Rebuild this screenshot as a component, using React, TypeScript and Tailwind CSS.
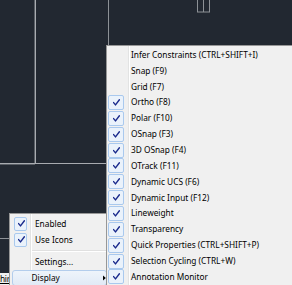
import React from "react";

const mainItems: { label: string; checked: boolean }[] = [
  { label: "Infer Constraints (CTRL+SHIFT+I)", checked: false },
  { label: "Snap (F9)", checked: false },
  { label: "Grid (F7)", checked: false },
  { label: "Ortho (F8)", checked: true },
  { label: "Polar (F10)", checked: true },
  { label: "OSnap (F3)", checked: true },
  { label: "3D OSnap (F4)", checked: true },
  { label: "OTrack (F11)", checked: true },
  { label: "Dynamic UCS (F6)", checked: true },
  { label: "Dynamic Input (F12)", checked: true },
  { label: "Lineweight", checked: true },
  { label: "Transparency", checked: true },
  { label: "Quick Properties (CTRL+SHIFT+P)", checked: true },
  { label: "Selection Cycling (CTRL+W)", checked: true },
  { label: "Annotation Monitor", checked: true },
];

function CheckMark() {
  return (
    <svg width="7" height="7" viewBox="0 0 7 7" className="ml-[2px]">
      <path d="M0.6 3.6 L2.5 5.9 L6.4 0.8" stroke="#1a2a8c" strokeWidth="1.4" fill="none" strokeLinecap="round" strokeLinejoin="round" />
    </svg>
  );
}

function CheckBox({ w }: { w: string }) {
  return (
    <div className={`${w} h-[14px] rounded-[2px] border border-[#a9c9ee] bg-[#eaf2fb] flex items-center justify-center`}>
      <CheckMark />
    </div>
  );
}

function MainRow({ label, checked }: { label: string; checked: boolean }) {
  return (
    <div className="flex items-center h-[15.86px]">
      <div className="w-[21px] flex items-center pl-[0.5px]">
        {checked ? (
          <div className="w-[16px] h-[15px] rounded-[2px] border border-[#a9c9ee] bg-[#eaf2fb] flex items-center justify-center">
            <CheckMark />
          </div>
        ) : null}
      </div>
      <span className="ml-[3px] whitespace-nowrap leading-none">{label}</span>
    </div>
  );
}

export default function App() {
  return (
    <div className="relative w-[292px] h-[285px] overflow-hidden bg-[#222831] font-['Noto_Sans',sans-serif] text-[8.3px] text-black">
      {/* CAD canvas drawing */}
      <svg width="292" height="285" className="absolute inset-0">
        <line x1="34.5" y1="0" x2="34.5" y2="164" stroke="#5a5f66" />
        <line x1="35.5" y1="0" x2="35.5" y2="163" stroke="#a8abb0" />
        <line x1="0" y1="163.5" x2="106" y2="163.5" stroke="#a8abb0" />
        <line x1="0" y1="164.5" x2="35" y2="164.5" stroke="#5a5f66" />
        <line x1="108.5" y1="0" x2="108.5" y2="45" stroke="#8d9196" />
        <rect x="197.5" y="-1" width="12" height="13" stroke="#8d9196" fill="none" />
        <line x1="203.5" y1="-1" x2="203.5" y2="12" stroke="#8d9196" />
        <line x1="0" y1="238.5" x2="9" y2="238.5" stroke="#8d9196" />
      </svg>

      {/* partially hidden tab at bottom-left */}
      <div className="absolute left-0 top-[273px] w-[10px] h-[12px] bg-[#f0f0f0] flex items-start">
        <span className="mt-[2px] whitespace-nowrap leading-none underline tracking-[-0.3px]">hir</span>
      </div>

      {/* left context menu */}
      <div className="absolute left-[9px] top-[213px] w-[99px] h-[80px] border border-[#979797] bg-[#f0f0f0] pt-[2px] pl-[1px] bg-[linear-gradient(to_right,transparent_20px,#e2e3e3_20px,#e2e3e3_21px,#ffffff_21px,#ffffff_22px,transparent_22px)]">
        <div className="flex items-center h-[15.86px]">
          <div className="w-[20px] flex items-center pl-[3px]">
            <CheckBox w="w-[13px]" />
          </div>
          <span className="ml-[4px] leading-none">Enabled</span>
        </div>
        <div className="flex items-center h-[15.86px]">
          <div className="w-[20px] flex items-center pl-[3px]">
            <CheckBox w="w-[13px]" />
          </div>
          <span className="ml-[4px] leading-none">Use Icons</span>
        </div>
        <div className="h-[6.3px] pl-[21px] pt-[2.5px]">
          <div className="h-[1px] bg-[#e0e0e0]" />
          <div className="h-[1px] bg-white" />
        </div>
        <div className="flex items-center h-[15.86px]">
          <div className="w-[20px]" />
          <span className="ml-[4px] leading-none">Settings...</span>
        </div>
        <div className="flex items-center h-[16px] ml-[1px] rounded-[3px] border border-[#b3cdec] bg-[linear-gradient(to_bottom,#eef4fb,#e1eaf6)]">
          <div className="w-[18px]" />
          <span className="ml-[4px] leading-none">Display</span>
          <svg width="4" height="6" viewBox="0 0 4 6" className="ml-[43px]">
            <path d="M0 0 L3.5 3 L0 6 Z" fill="#000" />
          </svg>
        </div>
      </div>

      {/* main cascading menu */}
      <div className="absolute left-[106px] top-[45px] w-[200px] h-[250px] border border-[#979797] bg-[#f0f0f0] pt-[1px] bg-[linear-gradient(to_right,transparent_21px,#e2e3e3_21px,#e2e3e3_22px,#ffffff_22px,#ffffff_23px,transparent_23px)]">
        {mainItems.map((it) => (
          <MainRow key={it.label} label={it.label} checked={it.checked} />
        ))}
      </div>
    </div>
  );
}
